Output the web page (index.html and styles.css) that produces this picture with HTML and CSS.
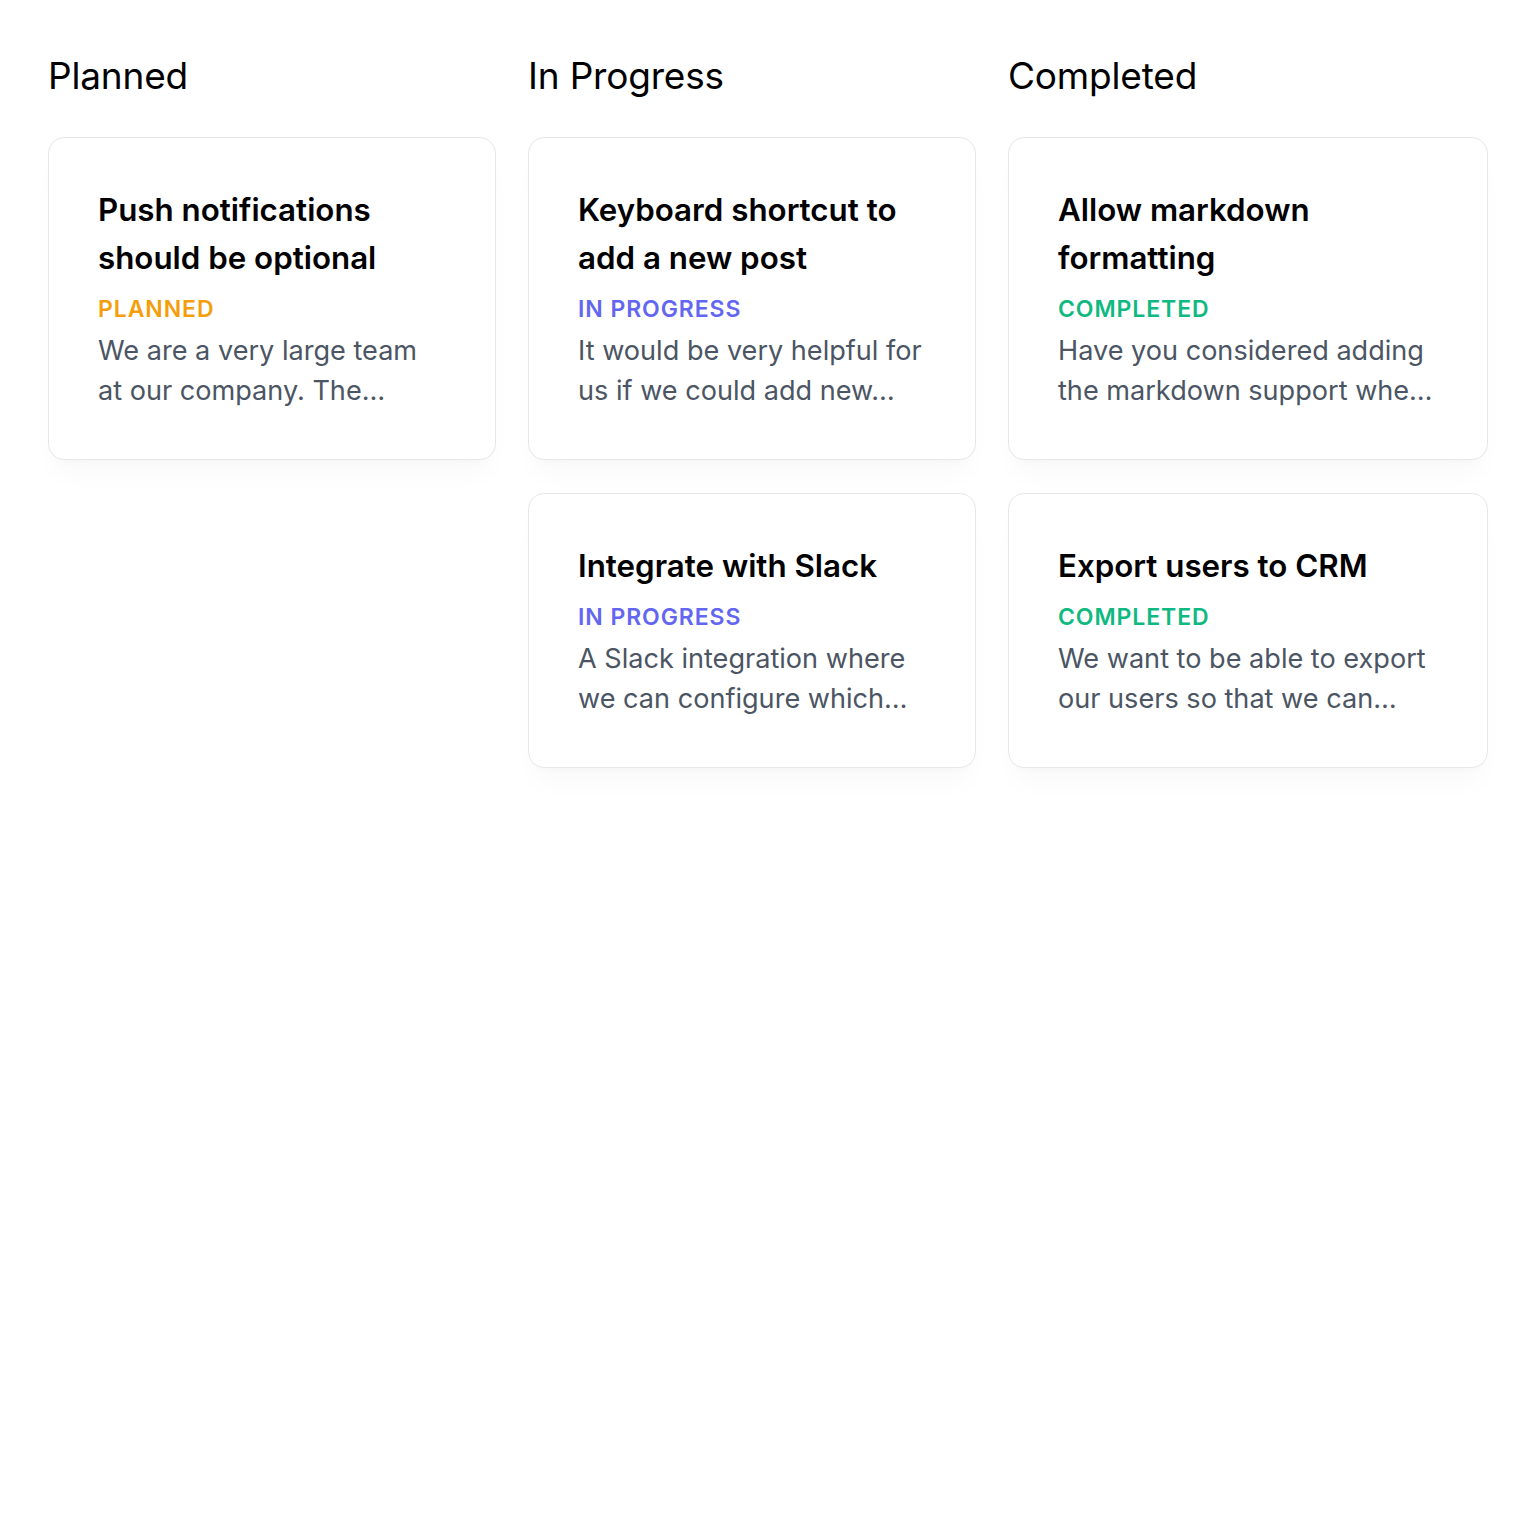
FILE: index.html
```html
<!DOCTYPE html>
<html>
<head>
<meta charset="utf-8">
<link rel="stylesheet" href="styles.css">
</head>
<body>
<main class="board">
  <section class="column">
    <h2 class="column-title">Planned</h2>
    <div class="cards">
      <article class="card">
        <h3 class="card-title">Push notifications should be optional</h3>
        <div class="status status-planned">Planned</div>
        <p class="card-desc">We are a very large team at our company. The…</p>
      </article>
    </div>
  </section>
  <section class="column">
    <h2 class="column-title">In Progress</h2>
    <div class="cards">
      <article class="card">
        <h3 class="card-title">Keyboard shortcut to add a new post</h3>
        <div class="status status-progress">In Progress</div>
        <p class="card-desc">It would be very helpful for us if we could add new…</p>
      </article>
      <article class="card">
        <h3 class="card-title">Integrate with Slack</h3>
        <div class="status status-progress">In Progress</div>
        <p class="card-desc">A Slack integration where we can configure which…</p>
      </article>
    </div>
  </section>
  <section class="column">
    <h2 class="column-title">Completed</h2>
    <div class="cards">
      <article class="card">
        <h3 class="card-title">Allow markdown formatting</h3>
        <div class="status status-completed">Completed</div>
        <p class="card-desc">Have you considered adding the markdown support whe…</p>
      </article>
      <article class="card">
        <h3 class="card-title">Export users to CRM</h3>
        <div class="status status-completed">Completed</div>
        <p class="card-desc">We want to be able to export our users so that we can…</p>
      </article>
    </div>
  </section>
</main>
</body>
</html>
```
FILE: styles.css
```css
* { box-sizing: border-box; }
html, body { margin: 0; padding: 0; background: #ffffff; }
body { font-family: Inter, "Noto Sans", sans-serif; color: #000; }

.board {
  display: grid;
  grid-template-columns: 448px 448px 480px;
  column-gap: 32px;
  padding: 48px 48px;
  align-items: start;
}

.column-title {
  margin: 0 0 33px 0;
  font-family: Inter, "Noto Sans", sans-serif;
  font-weight: 400;
  font-size: 37px;
  line-height: 56px;
  letter-spacing: -0.005em;
  color: #000;
}

.cards {
  display: flex;
  flex-direction: column;
  gap: 33px;
}

.card {
  background: #fff;
  border: 1px solid #e5e7eb;
  border-radius: 16px;
  padding: 48px 47px 48px 49px;
  box-shadow: 0 20px 25px -5px rgba(0,0,0,0.025), 0 8px 10px -6px rgba(0,0,0,0.02);
}

.card-title {
  margin: 0;
  font-size: 31.3px;
  line-height: 48px;
  font-weight: 600;
  color: #000;
}

.status {
  margin: 9px 0 4px 0;
  font-size: 23px;
  line-height: 36px;
  font-weight: 600;
  text-transform: uppercase;
  letter-spacing: 0.04em;
}
.status-planned { color: #f59e0b; }
.status-progress { color: #6366f1; }
.status-completed { color: #10b981; }

.card-desc {
  margin: 0;
  font-size: 27.1px;
  line-height: 40px;
  color: #4b5563;
}
```
